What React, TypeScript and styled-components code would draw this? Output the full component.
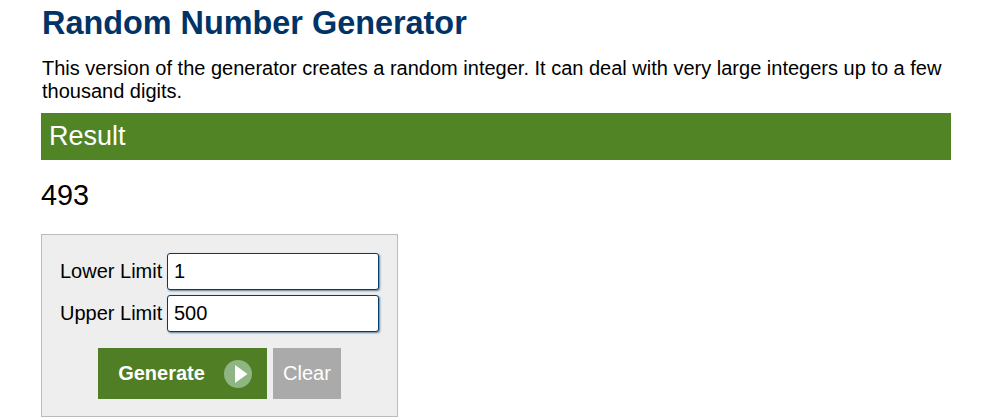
import styled, { createGlobalStyle } from 'styled-components';

const GlobalStyle = createGlobalStyle`
  html, body {
    background: #fff;
    color: #000;
    font-family: "Liberation Sans", Arial, sans-serif;
    margin: 0;
    overflow: hidden;
    padding: 0;
  }
`;

const Page = styled.main`
  box-sizing: border-box;
  height: 420px;
  padding: 0 47px 0 41px;
  width: 998px;
`;

const Title = styled.h1`
  color: #003366;
  font-size: 32.4px;
  font-weight: 700;
  line-height: 38px;
  margin: 0;
  padding: 4px 0 15px 1px;
`;

const Intro = styled.p`
  font-size: 20px;
  line-height: 23px;
  margin: 0;
  padding-left: 1px;
`;

const ResultBar = styled.h2`
  background: #518425;
  color: #fff;
  font-size: 27px;
  font-weight: 400;
  height: 47px;
  line-height: 47px;
  margin: 10px 0 0;
  padding-left: 8px;
`;

const ResultValue = styled.div`
  font-size: 28.8px;
  line-height: 32px;
  margin-top: 19px;
`;

const Panel = styled.form`
  background: #eee;
  border: 1px solid #bbb;
  box-sizing: border-box;
  display: flex;
  flex-direction: column;
  height: 183px;
  margin-top: 23px;
  padding: 17px 18px 0;
  width: 357px;
`;

const Row = styled.label`
  align-items: center;
  display: flex;
  font-size: 20px;
  gap: 5px;
  height: 38px;
  margin-bottom: 4px;
`;

const LimitName = styled.span`
  text-align: right;
  white-space: nowrap;
  width: 102px;
`;

const LimitInput = styled.input`
  background: #fff;
  border: 1px solid #003f6b;
  border-radius: 3px;
  box-shadow: 1px 1px 2px #5f7f97;
  box-sizing: border-box;
  color: #000;
  font-family: inherit;
  font-size: 20px;
  height: 37px;
  outline: none;
  padding: 0 6px;
  width: 212px;
`;

const Buttons = styled.div`
  display: flex;
  gap: 6px;
  margin-top: 12px;
  padding-left: 38px;
`;

const ActionButton = styled.button<{ $primary?: boolean }>`
  align-items: center;
  background: ${({ $primary }) => ($primary ? '#4f7e25' : '#aaaaaa')};
  border: 0;
  color: #fff;
  display: flex;
  font-family: inherit;
  font-size: 20px;
  font-weight: ${({ $primary }) => ($primary ? 700 : 400)};
  gap: 19px;
  height: 51px;
  justify-content: center;
  padding: ${({ $primary }) => ($primary ? '0 0 0 5px' : '0')};
  width: ${({ $primary }) => ($primary ? '169px' : '68px')};
`;

const PlayIcon = () => (
  <svg width="28" height="28" viewBox="0 0 28 28" aria-hidden="true">
    <circle cx="14" cy="14" r="14" fill="#8fb583" />
    <path d="M11 5 L23.5 14 L11 23 Z" fill="#fff" />
  </svg>
);

export default function App() {
  return (
    <Page>
      <GlobalStyle />
      <Title>Random Number Generator</Title>
      <Intro>
        This version of the generator creates a random integer. It can deal with very large integers up to a few
        thousand digits.
      </Intro>
      <ResultBar>Result</ResultBar>
      <ResultValue>493</ResultValue>
      <Panel onSubmit={(e) => e.preventDefault()}>
        <Row>
          <LimitName>Lower Limit</LimitName>
          <LimitInput defaultValue="1" />
        </Row>
        <Row>
          <LimitName>Upper Limit</LimitName>
          <LimitInput defaultValue="500" />
        </Row>
        <Buttons>
          <ActionButton $primary type="button">
            Generate
            <PlayIcon />
          </ActionButton>
          <ActionButton type="button">Clear</ActionButton>
        </Buttons>
      </Panel>
    </Page>
  );
}
